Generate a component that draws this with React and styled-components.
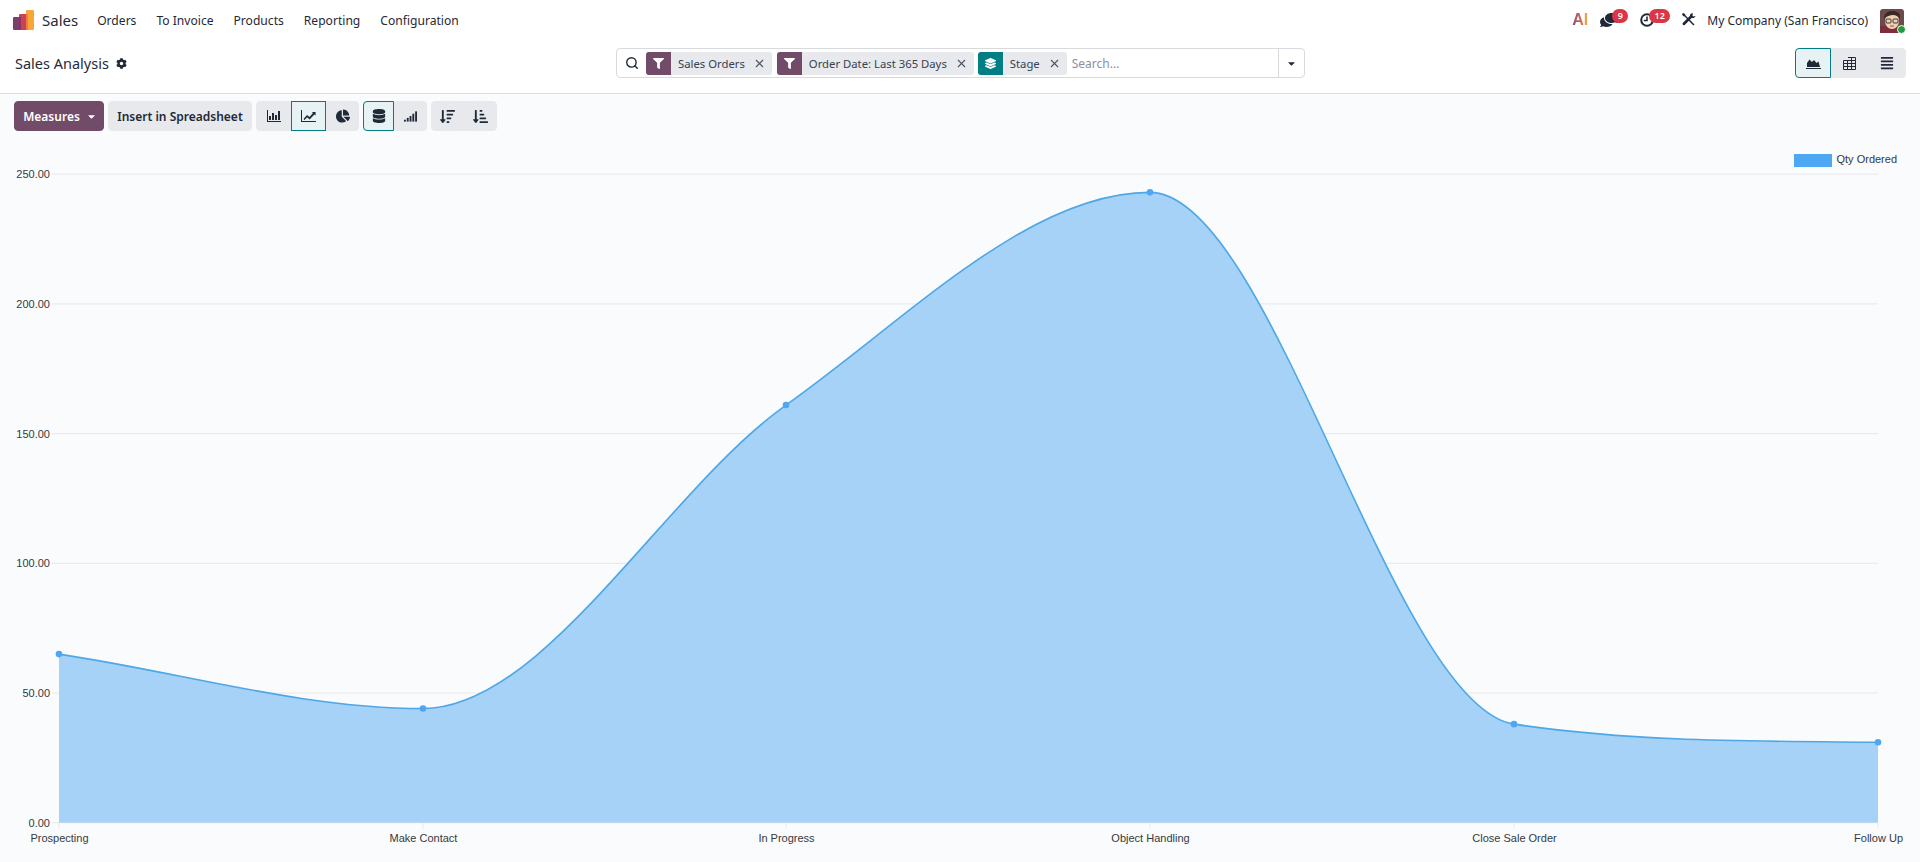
import React from "react";
import styled, { createGlobalStyle } from "styled-components";
import {
  FaCog,
  FaFilter,
  FaLayerGroup,
  FaCaretDown,
  FaComments,
  FaChartPie,
  FaDatabase,
  FaSortAmountDown,
  FaSortAmountDownAlt,
  FaAlignJustify,
} from "react-icons/fa";
import { Search, X } from "lucide-react";

const GlobalStyle = createGlobalStyle`
  html, body {
    margin: 0;
    padding: 0;
    height: 100%;
    overflow: hidden;
    background: #f9fbfd;
    font-family: "Noto Sans", "Open Sans", sans-serif;
    color: #374151;
  }
  * { box-sizing: border-box; }
`;

const Page = styled.div`
  width: 1920px;
  height: 862px;
  display: flex;
  flex-direction: column;
  overflow: hidden;
`;

const Nav = styled.header`
  height: 40px;
  background: #fff;
  display: flex;
  align-items: center;
  padding: 0 16px 0 13px;
`;

const Brand = styled.div`
  display: flex;
  align-items: center;
  gap: 8px;
  font-size: 15px;
  color: #1f2937;
  margin-right: 19px;
`;

const Menu = styled.nav`
  display: flex;
  gap: 20px;
  font-size: 12.1px;
  color: #1f2937;
`;

const NavRight = styled.div`
  margin-left: auto;
  display: flex;
  align-items: center;
  height: 100%;
`;

const AiMark = styled.span`
  font-family: "Liberation Sans", Arial, sans-serif;
  font-size: 16px;
  font-weight: 700;
  width: 17px;
  background: linear-gradient(90deg, #7c4a78 0%, #d9694a 55%, #f3c14f 100%);
  -webkit-background-clip: text;
  background-clip: text;
  color: transparent;
  margin-right: 11px;
`;

const Systray = styled.span`
  position: relative;
  display: flex;
  align-items: center;
  font-size: ${(p) => p.$size || 16}px;
  color: #1f2937;
  width: ${(p) => p.$width}px;
`;

const Badge = styled.span`
  position: absolute;
  top: calc(50% - 11px);
  left: ${(p) => p.$left}px;
  height: 14px;
  min-width: ${(p) => p.$width}px;
  border-radius: 8px;
  background: #dc3545;
  color: #fff;
  font-size: 9px;
  font-weight: 600;
  line-height: 14px;
  text-align: center;
`;

const Company = styled.span`
  font-size: 12px;
  color: #1f2937;
  margin-right: 12px;
`;

const Avatar = styled.span`
  position: relative;
  display: block;
  width: 24px;
  height: 24px;
  margin-top: 1px;
`;

const Presence = styled.span`
  position: absolute;
  right: -2px;
  bottom: -1px;
  width: 9px;
  height: 9px;
  border-radius: 50%;
  background: #1f9d3a;
  border: 1px solid #fff;
`;

const ControlPanel = styled.section`
  height: 54px;
  background: #fff;
  border-bottom: 1px solid #d8dfe3;
  display: grid;
  grid-template-columns: 1fr 689px 1fr;
  align-items: center;
  padding: 0 14px 7px 15px;
`;

const Title = styled.div`
  display: flex;
  align-items: center;
  gap: 7px;
  font-size: 14.5px;
  color: #1f2937;
  svg { font-size: 11px; }
`;

const SearchBar = styled.div`
  height: 30px;
  border: 1px solid #d8dadd;
  border-radius: 4px;
  background: #fff;
  display: flex;
  align-items: center;
  padding-left: 8px;
  font-size: 11.3px;
`;

const SearchIcon = styled(Search)`
  width: 14px;
  height: 14px;
  color: #1f2937;
  margin-right: 7px;
  stroke-width: 2.4;
`;

const Facet = styled.div`
  height: 23px;
  display: flex;
  align-items: center;
  background: #e7e9ed;
  border-radius: 3px;
  margin-right: ${(p) => p.$gap ?? 4}px;
  color: #374151;
  overflow: hidden;
`;

const FacetIcon = styled.span`
  width: 25px;
  align-self: stretch;
  display: flex;
  align-items: center;
  justify-content: center;
  background: ${(p) => p.$color};
  color: #fff;
  font-size: 11px;
  margin-right: 7px;
`;

const FacetClose = styled(X)`
  width: 13px;
  height: 13px;
  color: #4b5563;
  margin: 0 6px 0 8px;
`;

const SearchInput = styled.span`
  flex: 1;
  color: #8b919a;
  margin-left: 1px;
  font-size: 12px;
`;

const CaretBox = styled.span`
  width: 26px;
  align-self: stretch;
  border-left: 1px solid #d8dadd;
  display: flex;
  align-items: center;
  justify-content: center;
  font-size: 11px;
  color: #1f2937;
`;

const Switcher = styled.div`
  justify-self: end;
  display: flex;
`;

const Toolbar = styled.div`
  display: flex;
  align-items: center;
  padding: 7px 14px 0;
  height: 37px;
  flex: none;
`;

const Group = styled.div`
  display: flex;
  margin-right: ${(p) => p.$gap ?? 4}px;
`;

const Btn = styled.button`
  height: 30px;
  border: 1px solid ${(p) => (p.$active ? "#017e84" : "#e7e9ed")};
  background: ${(p) => (p.$active ? "#e6f2f3" : "#e7e9ed")};
  width: ${(p) => p.$width}px;
  padding: 0;
  margin: 0;
  display: flex;
  align-items: center;
  justify-content: center;
  font-family: inherit;
  font-size: 12px;
  font-weight: 600;
  color: #1f2937;
  border-radius: 0;
  &:first-child {
    border-top-left-radius: 4px;
    border-bottom-left-radius: 4px;
  }
  &:last-child {
    border-top-right-radius: 4px;
    border-bottom-right-radius: 4px;
  }
`;

const PrimaryBtn = styled(Btn)`
  background: #714b67;
  border-color: #714b67;
  color: #fff;
  gap: 6px;
  padding-left: 2px;
  svg { font-size: 11px; }
`;

const ChartWrap = styled.div`
  flex: 1;
  min-height: 0;
  svg {
    display: block;
    font-family: "Liberation Sans", Arial, sans-serif;
  }
`;

// chart scale, measured on the picture
const TOP = 131;
const xs = [59, 423, 786, 1150, 1514, 1878];
const labels = [
  "Prospecting",
  "Make Contact",
  "In Progress",
  "Object Handling",
  "Close Sale Order",
  "Follow Up",
];
const values = [65, 44, 161, 243, 38, 31];
const ticks = [0, 50, 100, 150, 200, 250];
const base = 822.7 - TOP;
const yOf = (v) => base - v * 2.594;

// same monotone interpolation as chart.js uses
function monotonePath(pts) {
  const n = pts.length;
  const d = [];
  for (let i = 0; i < n - 1; i++) {
    d.push((pts[i + 1].y - pts[i].y) / (pts[i + 1].x - pts[i].x));
  }
  const m = pts.map((_, i) => {
    if (i === 0) return d[0];
    if (i === n - 1) return d[n - 2];
    return Math.sign(d[i - 1]) !== Math.sign(d[i]) ? 0 : (d[i - 1] + d[i]) / 2;
  });
  for (let i = 0; i < n - 1; i++) {
    const a = m[i] / d[i];
    const b = m[i + 1] / d[i];
    const s = a * a + b * b;
    if (s > 9) {
      const t = 3 / Math.sqrt(s);
      m[i] = a * t * d[i];
      m[i + 1] = b * t * d[i];
    }
  }
  let path = `M${pts[0].x} ${pts[0].y}`;
  for (let i = 0; i < n - 1; i++) {
    const h = (pts[i + 1].x - pts[i].x) / 3;
    path += ` C${pts[i].x + h} ${pts[i].y + m[i] * h} ${pts[i + 1].x - h} ${
      pts[i + 1].y - m[i + 1] * h
    } ${pts[i + 1].x} ${pts[i + 1].y}`;
  }
  return path;
}

function Chart() {
  const pts = xs.map((x, i) => ({ x, y: yOf(values[i]) }));
  const line = monotonePath(pts);
  return (
    <svg width="1920" height="731" viewBox="0 0 1920 731">
      {ticks.map((t) => (
        <g key={t}>
          <line x1="52" x2="1878" y1={yOf(t)} y2={yOf(t)} stroke="#e6e8eb" />
          <text x="50" y={yOf(t) + 4} textAnchor="end" fontSize="11" fill="#343a40">
            {t.toFixed(2)}
          </text>
        </g>
      ))}
      {xs.map((x, i) => (
        <g key={x}>
          <line x1={x} x2={x} y1={base} y2={base + 6} stroke="#e6e8eb" />
          <text
            x={i === 5 ? 1903 : x + 0.5}
            y={base + 19}
            textAnchor={i === 5 ? "end" : "middle"}
            fontSize="11"
            fill="#343a40"
          >
            {labels[i]}
          </text>
        </g>
      ))}
      <path d={`${line} L1878 ${base} L59 ${base} Z`} fill="#a6d2f8" />
      <path d={line} fill="none" stroke="#4ea7e6" strokeWidth="1.6" />
      {pts.map((p) => (
        <circle key={p.x} cx={p.x} cy={p.y} r="3.3" fill="#4ea7f2" />
      ))}
      <rect x="1794" y="23" width="38" height="13" fill="#4ea7f2" />
      <text x="1836.5" y="32" fontSize="11" fill="#343a40">
        Qty Ordered
      </text>
    </svg>
  );
}

const Logo = () => (
  <svg width="21" height="20" viewBox="0 0 21 20">
    <rect x="0" y="7" width="8" height="13" rx="1" fill="#7b3f6e" />
    <rect x="6" y="4" width="8" height="16" rx="1" fill="#c8425a" />
    <rect x="13" y="0" width="8" height="20" rx="1" fill="#f9a53a" />
    <rect x="13" y="4" width="2" height="16" fill="#ef7d3b" />
    <rect x="6" y="7" width="2" height="13" fill="#92305e" />
  </svg>
);

const BarIcon = () => (
  <svg width="14" height="12" viewBox="0 0 14 12" fill="#1f2937">
    <path d="M0 0h1v11h13v1H0z" />
    <rect x="2" y="6" width="2" height="4" />
    <rect x="5" y="3" width="2" height="7" />
    <rect x="8" y="5" width="2" height="5" />
    <rect x="11" y="1" width="2" height="9" />
  </svg>
);

const LineIcon = () => (
  <svg width="15" height="12" viewBox="0 0 15 12" fill="#1f2937">
    <path d="M0 0h1v11h14v1H0z" />
    <path d="M2.5 9 6 5l2.5 2L12 3l-1.2-1H14.6v3.6L13.4 4.4 8.6 9.4 6.1 7.3 3.6 10z" />
  </svg>
);

const SignalIcon = () => (
  <svg width="13" height="11" viewBox="0 0 14 11" fill="#1f2937">
    <rect x="0" y="9" width="2" height="2" />
    <rect x="3" y="7" width="2" height="4" />
    <rect x="6" y="5" width="2" height="6" />
    <rect x="9" y="2.5" width="2" height="8.5" />
    <rect x="12" y="0" width="2" height="11" />
  </svg>
);

const AreaIcon = () => (
  <svg width="15" height="12" viewBox="0 0 15 12" fill="#1f2937">
    <path d="M0 11h15v1H0z" />
    <path d="M1 10V6l2.5-3.5L6 5l2-2 2.5 3L12.5 4.5 14 10z" />
  </svg>
);

const TableIcon = () => (
  <svg width="13" height="13" viewBox="0 0 13 13" fill="none" stroke="#1f2937">
    <path d="M.5 3.5h12v9H.5zM5 .5h7.5v3M.5 6.5h12M.5 9.5h12M4.5 3.5v9M8.500 .5v12" />
  </svg>
);

const ClockIcon = () => (
  <svg width="14" height="14" viewBox="0 0 14 14" fill="none" stroke="#1f2937">
    <circle cx="7" cy="7" r="5.8" strokeWidth="2" />
    <path d="M7 3.5V7.5H3.8" strokeWidth="1.5" />
  </svg>
);

const ToolsIcon = () => (
  <svg width="14" height="14" viewBox="0 0 14 14" fill="#1f2937">
    <path d="M1 0 3 1l.6 1.6 8.9 8.8-1.1 1.100-8.800-8.900L1 3 0 1z" />
    <path d="M13.6 3 11.4 3.6 10.4 2.6 11 .4C9.5-.2 7.8 1 8 2.8L1 9.8c-1.2 1.200.2 3.200 1.700 2.200l7-7c1.900.3 3.500-.7 3.900-2z" />
  </svg>
);

const AvatarFace = () => (
  <svg width="24" height="24" viewBox="0 0 24 24">
    <rect width="24" height="24" rx="3" fill="#6d4a4c" />
    <rect x="0" y="17" width="24" height="7" fill="#7b2f3a" />
    <ellipse cx="12" cy="12" rx="7" ry="8" fill="#f0cfb4" />
    <path d="M4 10C4 3 9 2 13 2s8 2 7 8c-2-3-4-4-7-4S7 7 4 10z" fill="#3a2a26" />
    <rect x="6" y="10" width="5" height="4" rx="1" fill="none" stroke="#3a3a3a" />
    <rect x="13" y="10" width="5" height="4" rx="1" fill="none" stroke="#3a3a3a" />
    <path d="M10 17h4" stroke="#a0523f" />
  </svg>
);

export default function App() {
  return (
    <Page>
      <GlobalStyle />
      <Nav>
        <Brand>
          <Logo />
          Sales
        </Brand>
        <Menu>
          <span>Orders</span>
          <span>To Invoice</span>
          <span>Products</span>
          <span>Reporting</span>
          <span>Configuration</span>
        </Menu>
        <NavRight>
          <AiMark>AI</AiMark>
          <Systray $width={40} $size={18}>
            <FaComments style={{ transform: "scaleX(-1)" }} />
            <Badge $left={12} $width={16}>9</Badge>
          </Systray>
          <Systray $width={42} $size={14}>
            <ClockIcon />
            <Badge $left={9} $width={21}>12</Badge>
          </Systray>
          <Systray $width={25} $size={14}>
            <ToolsIcon />
          </Systray>
          <Company>My Company (San Francisco)</Company>
          <Avatar>
            <AvatarFace />
            <Presence />
          </Avatar>
        </NavRight>
      </Nav>
      <ControlPanel>
        <Title>
          Sales Analysis <FaCog />
        </Title>
        <SearchBar>
          <SearchIcon />
          <Facet $gap={5}>
            <FacetIcon $color="#714b67"><FaFilter /></FacetIcon>
            Sales Orders
            <FacetClose />
          </Facet>
          <Facet $gap={4}>
            <FacetIcon $color="#714b67"><FaFilter /></FacetIcon>
            Order Date: Last 365 Days
            <FacetClose />
          </Facet>
          <Facet>
            <FacetIcon $color="#017e84"><FaLayerGroup /></FacetIcon>
            Stage
            <FacetClose />
          </Facet>
          <SearchInput>Search...</SearchInput>
          <CaretBox><FaCaretDown /></CaretBox>
        </SearchBar>
        <Switcher>
          <Btn $active $width={36}><AreaIcon /></Btn>
          <Btn $width={37}><TableIcon /></Btn>
          <Btn $width={38}><FaAlignJustify size={14} /></Btn>
        </Switcher>
      </ControlPanel>
      <Toolbar>
        <Group>
          <PrimaryBtn $width={90}>
            Measures <FaCaretDown />
          </PrimaryBtn>
        </Group>
        <Group>
          <Btn $width={144}>Insert in Spreadsheet</Btn>
        </Group>
        <Group>
          <Btn $width={35}><BarIcon /></Btn>
          <Btn $active $width={35}><LineIcon /></Btn>
          <Btn $width={33}><FaChartPie size={14} /></Btn>
        </Group>
        <Group>
          <Btn $active $width={31}><FaDatabase size={14} /></Btn>
          <Btn $width={33}><SignalIcon /></Btn>
        </Group>
        <Group $gap={0}>
          <Btn $width={33}><FaSortAmountDown size={15} /></Btn>
          <Btn $width={33}><FaSortAmountDownAlt size={15} /></Btn>
        </Group>
      </Toolbar>
      <ChartWrap>
        <Chart />
      </ChartWrap>
    </Page>
  );
}
